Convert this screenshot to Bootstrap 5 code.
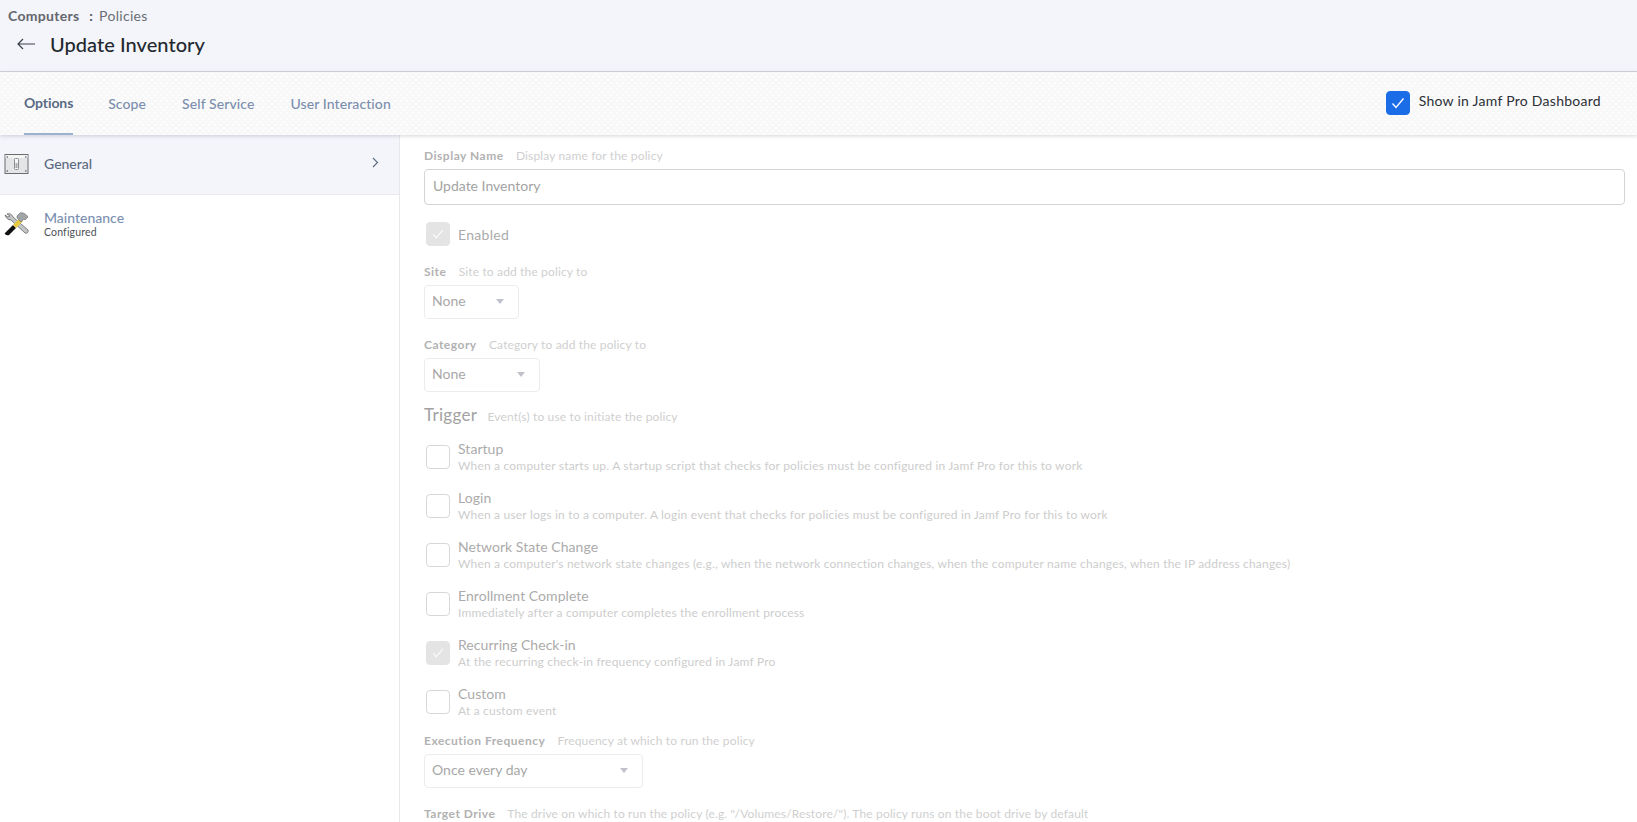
<!DOCTYPE html>
<html lang="en">
<head>
<meta charset="utf-8">
<title>Update Inventory</title>
<link href="https://cdn.jsdelivr.net/npm/bootstrap@5.3.0/dist/css/bootstrap.min.css" rel="stylesheet">
<style>
html,body{height:822px;overflow:hidden;background:#fff}
body{font-family:Lato,"Open Sans",sans-serif;color:#2b3038;letter-spacing:.3px}
.top-head{height:72px;background:#f3f5fa;border-bottom:1px solid #d3d5dc;padding:7px 0 0 8px}
.crumbs{font-size:14px;line-height:17px;color:#6a6d73}
.crumbs b{font-weight:700;color:#63666c}
.crumbs i{font-style:normal;font-weight:700;margin:0 2px 0 6px;color:#55585e}
.title-line{margin-top:8px;height:24px;padding-left:9px;gap:15px}
.title-line h1{font-size:20px;line-height:24px;margin:0;color:#24282f;letter-spacing:.05px;font-weight:500}
.tab-strip{height:63px;background-color:#f8f8f9;background-image:radial-gradient(circle at 2px 2px,#fdfdfd 1.2px,transparent 1.6px),radial-gradient(circle at 5px 5px,#fdfdfd 1.2px,transparent 1.6px);background-size:6px 6px;box-shadow:0 1px 4px rgba(40,50,70,.2);position:relative;z-index:2;padding:0 36px 0 24px}
.tab-item{display:flex;align-items:center;height:62px;padding-bottom:1px;font-size:14px;font-weight:500;letter-spacing:.09px;color:#7b8ead;margin-right:36px;text-decoration:none}
.tab-item.on{color:#596a85;border-bottom:2px solid #9cb0d0;font-weight:700;letter-spacing:-.1px;margin-right:35px}
.dash-check{font-size:14px;color:#2c3036;gap:9px;letter-spacing:.27px}
.dash-check .tick{margin-top:-2px}
.dash-check span:last-child{margin-top:-7px}
.tick{width:24px;height:24px;border-radius:4px;border:1px solid #d6d8dc;background:#fff;flex:none;display:flex;align-items:center;justify-content:center}
.tick.blue{background:#1a6de6;border-color:#1a6de6}
.tick.grey{background:#e4e4e4;border-color:#e4e4e4}
.main-area{height:687px}
.side-col{width:400px;flex:none;border-right:1px solid #e8e8ea;height:100%}
.side-row{display:flex;align-items:center;padding:0 0 2px 4px;height:60px;border-bottom:1px solid #e8eaee;position:relative}
.side-row.on{background:#f3f5fa}
.side-row .pic{width:26px;height:26px;flex:none;margin-right:14px}
.side-name{font-size:14px;line-height:16px;font-weight:500;letter-spacing:0;color:#5b6a80}
.side-name.alt{color:#7b8fb0}
.side-sub{font-size:10.5px;line-height:11px;color:#4c4f54;margin-top:1px;letter-spacing:.15px}
.chev{position:absolute;right:20px;top:22px}
.form-col{padding:13px 12px 0 24px;flex:1;min-width:0}
.lbl{font-size:12px;line-height:15px;height:15px;margin-bottom:6px;white-space:nowrap;letter-spacing:.15px}
.lbl b{font-weight:700;color:#b2b2b2;margin-right:9px;letter-spacing:.5px}
.lbl span{color:#cfcfcf}
.txt-in{height:36px;border:1px solid #d4d4d4;border-radius:4px;font-size:14px;letter-spacing:0;color:#a3a3a3;padding:0 8px 3px;display:flex;align-items:center;margin-bottom:16px}
.enabled-line{gap:8px;padding-left:2px;font-size:14px;color:#ababab;margin-bottom:17px;height:26px;align-items:center;display:flex}
.pick{height:34px;border:1px solid #ececec;border-radius:4px;font-size:14px;letter-spacing:0;color:#a8a8a8;padding:0 14px 3px 7px;display:flex;align-items:center;justify-content:space-between;margin-bottom:18px}
.w-a{width:95px}.w-b{width:116px}.w-c{width:219px}
.caret-d{width:0;height:0;border-left:4.5px solid transparent;border-right:4.5px solid transparent;border-top:5px solid #bfc2ca;margin-top:2px}
.trig-h{font-size:17px;line-height:20px;color:#a2a2a2;margin-bottom:16px;white-space:nowrap;height:20px;margin-top:-5px}
.trig-h span{font-size:12px;color:#cfcfcf;margin-left:6px;letter-spacing:.15px}
.opt{display:flex;gap:8px;padding-left:2px;height:49px;align-items:flex-start}
.opt .tick{margin-top:4px}
.opt-t{font-size:14px;line-height:18px;letter-spacing:.05px;color:#ababab;margin-top:-1px}
.opt-d{font-size:12px;line-height:15px;color:#cdcdcd;white-space:nowrap;letter-spacing:.19px}
.tail{margin-top:-2px}
</style>
</head>
<body>
<header class="top-head">
  <div class="crumbs"><b>Computers</b> <i>:</i> Policies</div>
  <div class="title-line d-flex align-items-center">
    <svg width="18" height="12" viewBox="0 0 18 12" fill="none" stroke="#3c4046" stroke-width="1.2"><path d="M18 6H1M6 1 1 6l5 5"/></svg>
    <h1>Update Inventory</h1>
  </div>
</header>
<nav class="tab-strip d-flex justify-content-between align-items-center">
  <div class="d-flex">
    <a class="tab-item on" href="#">Options</a>
    <a class="tab-item" href="#">Scope</a>
    <a class="tab-item" href="#">Self Service</a>
    <a class="tab-item" href="#">User Interaction</a>
  </div>
  <div class="dash-check d-flex align-items-center">
    <span class="tick blue"><svg width="14" height="12" viewBox="0 0 14 12" fill="none" stroke="#fff" stroke-width="1.3"><path d="M1.5 6.5 5 10.5 12.5 1.5"/></svg></span>
    <span>Show in Jamf Pro Dashboard</span>
  </div>
</nav>
<div class="main-area d-flex">
  <aside class="side-col">
    <div class="side-row on">
      <svg class="pic" viewBox="0 0 26 26"><rect x="1" y="3.5" width="23" height="19" fill="#e4e5e6" stroke="#6a6d70" stroke-width="1"/><rect x="1.5" y="4" width="22" height="3" fill="#f4f4f4"/><rect x="10.5" y="7.5" width="4" height="11" rx="1" fill="#f7f7f7" stroke="#8b8d90"/><rect x="11.5" y="12" width="2" height="5" fill="#a8aaac"/><g fill="#55585c"><circle cx="3.2" cy="6" r=".8"/><circle cx="21.8" cy="6" r=".8"/><circle cx="3.2" cy="20" r=".8"/><circle cx="21.8" cy="20" r=".8"/></g></svg>
      <div class="side-name">General</div>
      <svg class="chev" width="7" height="11" viewBox="0 0 7 11" fill="none" stroke="#5b6a80" stroke-width="1.1"><path d="m1 1 4.5 4.5L1 10"/></svg>
    </div>
    <div class="side-row border-0">
      <svg class="pic" viewBox="0 0 26 26"><path d="M3 3c2-1 5 0 6 3l15 13c1 2-1 4-3 3L7 9C4 9 2 7 1 4l3 2 2-1z" fill="#c3c5c7" stroke="#55585c" stroke-width=".7"/><path d="M1 22 9 14l3 3-7 7c-2 1-5-1-4-2z" fill="#111"/><path d="m9 14 7-7 3 3-7 7z" fill="#e8cb3e"/><path d="m13 5 3-3c3-1 6 1 8 4l-3 3-1-1-3 3-4-4z" fill="#a2a5a8" stroke="#55585c" stroke-width=".5"/></svg>
      <div class="side-txt">
        <div class="side-name alt">Maintenance</div>
        <div class="side-sub">Configured</div>
      </div>
    </div>
  </aside>
  <main class="form-col">
    <div class="lbl"><b>Display Name</b> <span>Display name for the policy</span></div>
    <div class="txt-in">Update Inventory</div>
    <div class="enabled-line"><span class="tick grey"><svg width="12" height="10" viewBox="0 0 14 12" fill="none" stroke="#fff" stroke-width="1.3"><path d="M1.5 6.5 5 10.5 12.5 1.5"/></svg></span>Enabled</div>
    <div class="lbl"><b>Site</b> <span>Site to add the policy to</span></div>
    <div class="pick w-a"><span>None</span><i class="caret-d"></i></div>
    <div class="lbl"><b>Category</b> <span>Category to add the policy to</span></div>
    <div class="pick w-b"><span>None</span><i class="caret-d"></i></div>
    <div class="trig-h">Trigger <span>Event(s) to use to initiate the policy</span></div>
    <div class="opt"><span class="tick"></span><div><div class="opt-t">Startup</div><div class="opt-d">When a computer starts up. A startup script that checks for policies must be configured in Jamf Pro for this to work</div></div></div>
    <div class="opt"><span class="tick"></span><div><div class="opt-t">Login</div><div class="opt-d">When a user logs in to a computer. A login event that checks for policies must be configured in Jamf Pro for this to work</div></div></div>
    <div class="opt"><span class="tick"></span><div><div class="opt-t">Network State Change</div><div class="opt-d">When a computer's network state changes (e.g., when the network connection changes, when the computer name changes, when the IP address changes)</div></div></div>
    <div class="opt"><span class="tick"></span><div><div class="opt-t">Enrollment Complete</div><div class="opt-d">Immediately after a computer completes the enrollment process</div></div></div>
    <div class="opt"><span class="tick grey"><svg width="12" height="10" viewBox="0 0 14 12" fill="none" stroke="#fff" stroke-width="1.3"><path d="M1.5 6.5 5 10.5 12.5 1.5"/></svg></span><div><div class="opt-t">Recurring Check-in</div><div class="opt-d">At the recurring check-in frequency configured in Jamf Pro</div></div></div>
    <div class="opt"><span class="tick"></span><div><div class="opt-t">Custom</div><div class="opt-d">At a custom event</div></div></div>
    <div class="lbl tail"><b>Execution Frequency</b> <span>Frequency at which to run the policy</span></div>
    <div class="pick w-c"><span>Once every day</span><i class="caret-d"></i></div>
    <div class="lbl"><b>Target Drive</b> <span>The drive on which to run the policy (e.g. "/Volumes/Restore/"). The policy runs on the boot drive by default</span></div>
  </main>
</div>
<script src="https://cdn.jsdelivr.net/npm/bootstrap@5.3.0/dist/js/bootstrap.bundle.min.js"></script>
</body>
</html>
